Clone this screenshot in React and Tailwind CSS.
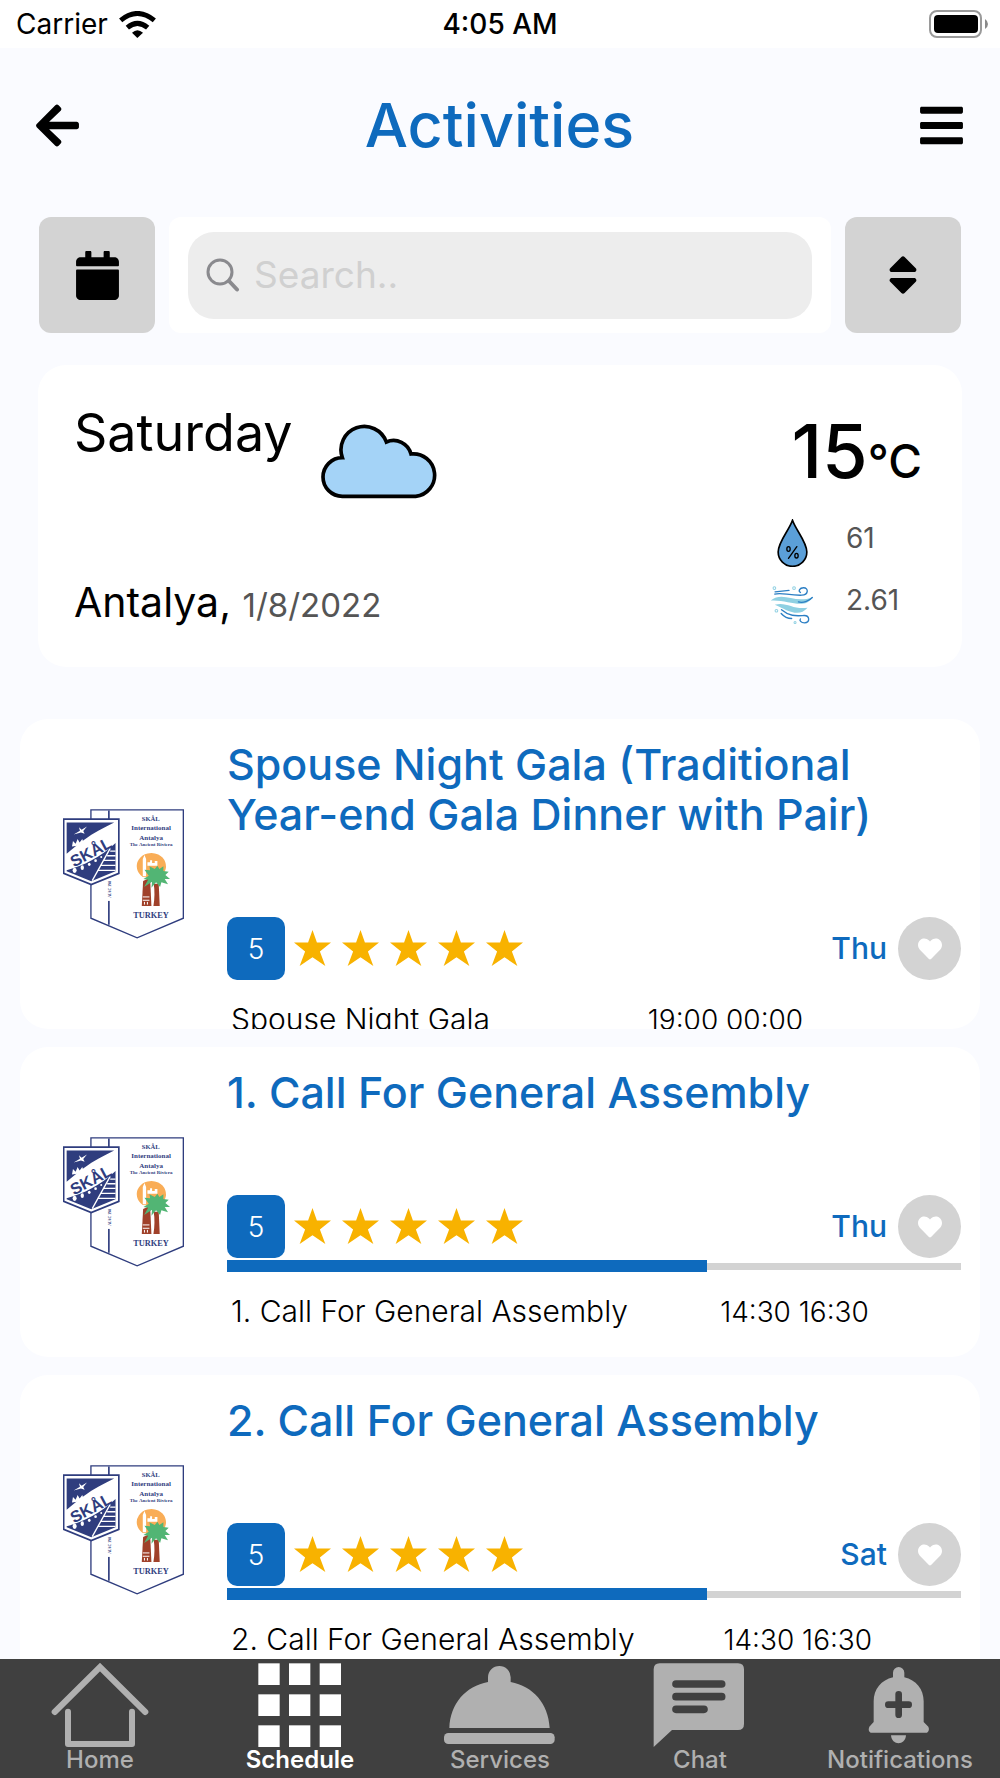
import { useState } from "react";
import { FaArrowLeft, FaBars, FaCalendar, FaHeart, FaSort } from "react-icons/fa";

const activities = [
  {
    id: 1,
    title: "Spouse Night Gala (Traditional Year-end Gala Dinner with Pair)",
    subtitle: "Spouse Night Gala",
    time: "19:00 00:00",
    day: "Thu",
    rating: 5,
    progress: null,
  },
  {
    id: 2,
    title: "1. Call For General Assembly",
    subtitle: "1. Call For General Assembly",
    time: "14:30 16:30",
    day: "Thu",
    rating: 5,
    progress: 65.4,
  },
  {
    id: 3,
    title: "2. Call For General Assembly",
    subtitle: "2. Call For General Assembly",
    time: "14:30 16:30",
    day: "Sat",
    rating: 5,
    progress: 65.4,
  },
];

function StatusBar() {
  return (
    <div className="flex h-12 shrink-0 items-center bg-white px-4 text-[28px] text-black">
      <div className="flex flex-1 items-center gap-[11px]">
        <span>Carrier</span>
        <svg viewBox="360 30 111 81" className="h-[27px] w-[37px]" fill="none" stroke="#000">
          <path d="M365 58 Q415 17 466 58" strokeWidth="15" />
          <path d="M385 80 Q415 54 446 80" strokeWidth="15" />
          <path d="M399 95 Q415 80 432 95 L415 111 Z" fill="#000" stroke="none" />
        </svg>
      </div>
      <span className="font-medium">4:05 AM</span>
      <div className="flex flex-1 justify-end">
        <svg viewBox="0 0 59 28" className="-mr-1 h-7 w-[59px]">
          <rect x="1" y="1" width="51" height="26" rx="7" fill="none" stroke="#9a9a9a" strokeWidth="2" />
          <rect x="5" y="5" width="44" height="18" rx="4" fill="#000" />
          <path d="M56 9 Q59 11 59 14 Q59 17 56 19 Z" fill="#8a8a8a" />
        </svg>
      </div>
    </div>
  );
}

function Header() {
  return (
    <header className="flex items-center justify-between pt-[41px] pr-[37px] pb-10 pl-9">
      <button aria-label="Back">
        <FaArrowLeft className="h-[49px] w-[43px]" />
      </button>
      <h1 className="text-[61px] leading-[72px] font-medium text-[#0e6abd]">Activities</h1>
      <button aria-label="Menu">
        <FaBars className="h-[49px] w-[43px]" />
      </button>
    </header>
  );
}

function Toolbar() {
  const [search, setSearch] = useState("");

  return (
    <div className="flex gap-[14px] px-[39px] pt-4">
      <button
        aria-label="Pick a date"
        className="flex size-[116px] shrink-0 items-center justify-center rounded-xl bg-[#d3d3d3]"
      >
        <FaCalendar className="h-[49px] w-[43px]" />
      </button>

      <div className="flex min-w-0 flex-1 items-center rounded-xl bg-white px-[19px]">
        <label className="flex h-[87px] min-w-0 flex-1 items-center gap-[14px] rounded-[26px] bg-[#ededed] px-[18px]">
          <svg
            viewBox="0 0 34 34"
            className="size-[34px] shrink-0"
            fill="none"
            stroke="#8a8a8e"
            strokeLinecap="round"
          >
            <circle cx="14" cy="14" r="12" strokeWidth="3" />
            <path d="M23 23 L31 31.5" strokeWidth="4" />
          </svg>
          <input
            type="text"
            aria-label="Search"
            placeholder="Search.."
            value={search}
            onChange={(e) => setSearch(e.target.value)}
            className="min-w-0 flex-1 bg-transparent text-[37px] outline-none placeholder:text-[#d0d0d0]"
          />
        </label>
      </div>

      <button
        aria-label="Sort"
        className="flex size-[116px] shrink-0 items-center justify-center rounded-xl bg-[#d3d3d3]"
      >
        <FaSort className="h-12 w-[30px]" />
      </button>
    </div>
  );
}

function CloudIcon() {
  return (
    <svg viewBox="908 222 354 225" className="h-[75px] w-[118px]">
      <path
        d="M972 439 H1192 A62 62 0 0 0 1178 312 A54 54 0 0 0 1104 276 A68 68 0 0 0 972 323 A58 58 0 0 0 972 439 Z"
        fill="#a4d3f7"
        stroke="#000"
        strokeWidth="11"
      />
    </svg>
  );
}

function DropIcon() {
  return (
    <svg viewBox="828 507 92 144" className="h-12 w-[31px]">
      <path
        d="M874 511 C864 541 831 575 831 606 A43 43 0 0 0 917 606 C917 575 884 541 874 511 Z"
        fill="#5b9fd8"
        stroke="#000"
        strokeWidth="5"
      />
      <g fill="none" stroke="#000" strokeWidth="4" strokeLinecap="round">
        <ellipse cx="862" cy="597" rx="5" ry="7" />
        <ellipse cx="886" cy="617" rx="5" ry="7" />
        <path d="M887 590 L862 625" />
      </g>
    </svg>
  );
}

function WindIcon() {
  return (
    <svg viewBox="811 706 130 118" className="h-10 w-11" fill="none" strokeLinecap="round">
      <path d="M813 752 C850 722 885 764 937 741 C913 782 865 748 813 752 Z" fill="#8fd0e2" />
      <path d="M825 764 C860 754 880 780 922 773 C895 804 862 780 825 764 Z" fill="#8fd0e2" />
      <g stroke="#2c7fc4" strokeWidth="4">
        <path d="M825 733 C845 727 865 737 905 736 C925 736 926 714 910 714 C898 714 894 724 901 728" />
        <path d="M826 726 L867 722" />
        <path d="M895 756 C910 760 928 752 936 743" />
        <path d="M845 779 C870 800 890 797 912 796 C929 796 930 817 913 818 C902 818 897 810 901 806" />
        <path d="M844 790 C853 800 863 805 875 805" />
      </g>
      <g stroke="#8fd0e2" strokeWidth="3">
        <circle cx="824" cy="715" r="4" />
        <circle cx="882" cy="715" r="4" />
        <circle cx="830" cy="782" r="4" />
        <circle cx="885" cy="817" r="3" />
      </g>
    </svg>
  );
}

function WeatherCard() {
  return (
    <section className="mx-[38px] mt-8 flex justify-between rounded-[28px] bg-white py-[38px] pr-10 pl-9">
      <div className="flex flex-col justify-between">
        <div className="flex gap-7">
          <p className="text-[52px] leading-[60px]">Saturday</p>
          <div className="pt-[21px]">
            <CloudIcon />
          </div>
        </div>
        <p className="text-[41px] leading-[48px]">
          Antalya, <span className="text-[33px] text-[#555]">1/8/2022</span>
        </p>
      </div>

      <div className="w-[152px] pt-2">
        <p className="flex h-20 items-baseline justify-end text-[74px] leading-[80px] font-medium">
          15<span className="text-[46px] leading-none">°C</span>
        </p>
        <div className="mt-7 flex flex-col gap-[14px] text-[28px] leading-[38px] text-[#555]">
          <div className="flex h-12 gap-8">
            <div className="flex w-11 justify-center">
              <DropIcon />
            </div>
            <span>61</span>
          </div>
          <div className="flex h-12 gap-8">
            <div className="flex w-11 items-center">
              <WindIcon />
            </div>
            <span>2.61</span>
          </div>
        </div>
      </div>
    </section>
  );
}

function SkalLogo() {
  return (
    <svg
      viewBox="68 56 364 390"
      className="h-[130px] w-[121px]"
      fontFamily="'Liberation Serif', serif"
      fontWeight="700"
      textAnchor="middle"
    >
      <path d="M152 58 H430 V384 L291 443 L152 384 Z" fill="#fff" stroke="#2f3d7e" strokeWidth="4" />
      <path d="M206 60 V404" stroke="#2f3d7e" strokeWidth="5" />
      <rect x="200" y="262" width="14" height="70" fill="#fff" />
      <text transform="translate(211 297) rotate(-90)" fontSize="12" fill="#2f3d7e">AIAC 198</text>

      {/* Shield */}
      <path d="M70 86 H236 V249 L153 283 L70 249 Z" fill="#fff" stroke="#2f3d7e" strokeWidth="5" />
      <path d="M79 96 H222 C190 112 160 126 132 148 C112 162 96 176 79 190 Z" fill="#2f3d7e" />
      <path d="M79 240 C130 226 180 202 226 158 V243 L153 273 L79 243 Z" fill="#2f3d7e" />
      <g fill="#fff">
        <path d="M100 132 L119 121 L116 110 L124 118 L140 108 L129 122 L133 130 L122 126 Z" />
        <path d="M95 168 L98 152 L106 160 L112 146 L118 156 L126 146 L130 158 L112 166 Z" />
        <ellipse cx="103" cy="240" rx="6" ry="8" />
        <ellipse cx="126" cy="232" rx="5" ry="7" />
        <ellipse cx="147" cy="222" rx="4" ry="5" />
        <ellipse cx="166" cy="211" rx="4" ry="4" />
        <ellipse cx="183" cy="200" rx="3" ry="3" />
      </g>
      <path
        d="M156 271 L210 174 M210 182 H226 M201 196 H226 M191 210 H226 M181 225 H226 M172 240 H226"
        stroke="#fff"
        strokeWidth="4"
      />
      <text
        transform="translate(160 200) rotate(-28)"
        fontFamily="'Liberation Sans', sans-serif"
        fontSize="49"
        fill="#2f3d7e"
      >
        SKÅL
      </text>

      <g fill="#2f3d7e">
        <text x="332" y="93" fontSize="20">SKÅL</text>
        <text x="333" y="119" fontSize="21">International</text>
        <text x="333" y="148" fontSize="21">Antalya</text>
        <text x="333" y="168" fontSize="15">The Ancient Riviera</text>
        <text x="333" y="383" fontSize="25">TURKEY</text>
      </g>

      {/* Sun, minaret and palm */}
      <path d="M308 260 A44 40 0 1 1 374 244 L340 262 Z" fill="#f9ad57" />
      <path d="M308 258 V206 L313 194 L318 206 V258 Z M322 216 h8 v-6 h6 v8 h8 v-6 h8 v14 h-30 Z" fill="#fff" />
      <path d="M309 272 L330 262 L334 347 H305 Z" fill="#a0412a" />
      <path d="M341 280 L356 280 L359 347 H340 C344 325 344 300 341 280 Z" fill="#a0412a" />
      <path d="M308 320 h20 M308 330 h20 M313 335 v8 M322 335 v8" stroke="#fff" strokeWidth="3" />
      <path
        d="M313 238 L330 240 L328 228 L344 236 L352 226 L358 236 L370 228 L370 242 L386 244 L376 254 L390 266 L374 266 L384 282 L364 276 L360 290 L348 276 L334 292 L336 274 L312 290 L324 268 L310 266 L326 256 Z"
        fill="#52b574"
      />
    </svg>
  );
}

function Star() {
  return (
    <svg viewBox="0 0 36 36" className="size-[37px]" fill="#f8b200">
      <path d="M18 0 L22.3 12.2 H36 L25.2 21 L30.5 35 L18 26.6 L5.5 35 L10.8 21 L0 12.2 H13.7 Z" />
    </svg>
  );
}

function ActivityCard({ activity }) {
  return (
    <article className="flex h-[310px] shrink-0 overflow-hidden rounded-[28px] bg-white">
      <div className="flex w-[207px] shrink-0 items-center pl-[43px]">
        <SkalLogo />
      </div>

      <div className="min-w-0 flex-1 pt-5 pr-[19px]">
        <h2 className="text-[43px] leading-[50px] font-medium text-[#0e6abd]">{activity.title}</h2>

        <div className="mt-[78px] flex h-[63px] items-center">
          <span className="flex h-full w-[58px] items-center justify-center rounded-[10px] bg-[#0e6abd] text-[28px] font-light text-white">
            {activity.rating}
          </span>
          <div className="ml-[9px] flex gap-[11px]">
            {Array.from({ length: activity.rating }, (_, i) => (
              <Star key={i} />
            ))}
          </div>
          <span className="ml-auto text-[30px] font-medium text-[#0e6abd]">{activity.day}</span>
          <button
            aria-label="Add to favourites"
            className="ml-[11px] flex size-[63px] items-center justify-center rounded-full bg-[#d3d3d3] text-white"
          >
            <FaHeart className="size-6" />
          </button>
        </div>

        {activity.progress && (
          <div className="mt-[2px] flex h-3 items-center">
            <div className="h-3 bg-[#0e6abd]" style={{ width: `${activity.progress}%` }} />
            <div className="h-[7px] flex-1 bg-[#d3d3d3]" />
          </div>
        )}

        <div className="mt-[22px] flex items-baseline pl-1 text-[30px] leading-[34px] font-light text-black">
          <span>{activity.subtitle}</span>
          <span className="flex-1 text-center text-[28px]">{activity.time}</span>
        </div>
      </div>
    </article>
  );
}

function HomeIcon() {
  return (
    <svg viewBox="132 69 336 252" className="h-21 w-28" fill="none" stroke="#b0b0b0" strokeLinecap="round">
      <path d="M164 216 L300 81 L436 216" strokeWidth="18" />
      <path d="M204 215 V312 H396 V215" strokeWidth="18" strokeLinejoin="round" />
    </svg>
  );
}

function GridIcon() {
  return (
    <svg viewBox="732 69 336 252" className="h-21 w-28" fill="#fff">
      {[70, 163, 256].map((y) =>
        [775, 867, 959].map((x) => <rect key={`${x}-${y}`} x={x} y={y} width="64" height="65" />)
      )}
    </svg>
  );
}

function ServiceIcon() {
  return (
    <svg viewBox="1330 69 336 252" className="h-21 w-28" fill="#b0b0b0">
      <path d="M1346 264 C1349 190 1395 139 1462 126 V112 A34 34 0 0 1 1530 112 V126 C1597 139 1643 190 1647 264 Z" />
      <rect x="1330" y="279" width="332" height="33" rx="13" />
    </svg>
  );
}

function ChatIcon() {
  return (
    <svg viewBox="432 69 336 252" className="h-21 w-28">
      <path d="M479 70 H714 Q732 70 732 88 V252 Q732 270 714 270 H516 L461 321 V88 Q461 70 479 70 Z" fill="#b0b0b0" />
      <path d="M528 132 H665 M528 170 H665 M528 208 H612" stroke="#404040" strokeWidth="23" strokeLinecap="round" />
    </svg>
  );
}

function BellIcon() {
  return (
    <svg viewBox="1032 69 336 252" className="h-21 w-28" fill="#b0b0b0">
      <path d="M1179 112 V98 A17 17 0 0 1 1213 98 V112 C1248 120 1271 148 1271 184 V246 L1285 260 Q1290 270 1281 278 H1112 Q1103 273 1108 260 L1121 246 V184 C1121 148 1144 120 1179 112 Z" />
      <path d="M1173 286 H1218 C1216 318 1175 318 1173 286 Z" />
      <path d="M1196 163 V224 M1165 194 H1226" stroke="#404040" strokeWidth="20" strokeLinecap="round" />
    </svg>
  );
}

const tabs = [
  { label: "Home", icon: HomeIcon },
  { label: "Schedule", icon: GridIcon, active: true },
  { label: "Services", icon: ServiceIcon },
  { label: "Chat", icon: ChatIcon },
  { label: "Notifications", icon: BellIcon },
];

function TabBar() {
  return (
    <nav className="flex shrink-0 bg-[#404040] pt-1 pb-[5px]">
      {tabs.map(({ label, icon: Icon, active }) => (
        <a key={label} href="#" className="flex flex-1 basis-0 flex-col items-center">
          <Icon />
          <span
            className={
              active
                ? "text-2xl leading-[26px] font-semibold text-white"
                : "text-2xl leading-[26px] font-medium text-[#b0b0b0]"
            }
          >
            {label}
          </span>
        </a>
      ))}
    </nav>
  );
}

export default function App() {
  return (
    <div className="flex h-screen flex-col bg-[#fafbff] font-[Inter,sans-serif] text-black">
      <StatusBar />
      <main className="min-h-0 flex-1 overflow-y-auto [scrollbar-width:none]">
        <Header />
        <Toolbar />
        <WeatherCard />
        <div className="mx-5 mt-13 flex flex-col gap-[18px]">
          {activities.map((activity) => (
            <ActivityCard key={activity.id} activity={activity} />
          ))}
        </div>
      </main>
      <TabBar />
    </div>
  );
}
